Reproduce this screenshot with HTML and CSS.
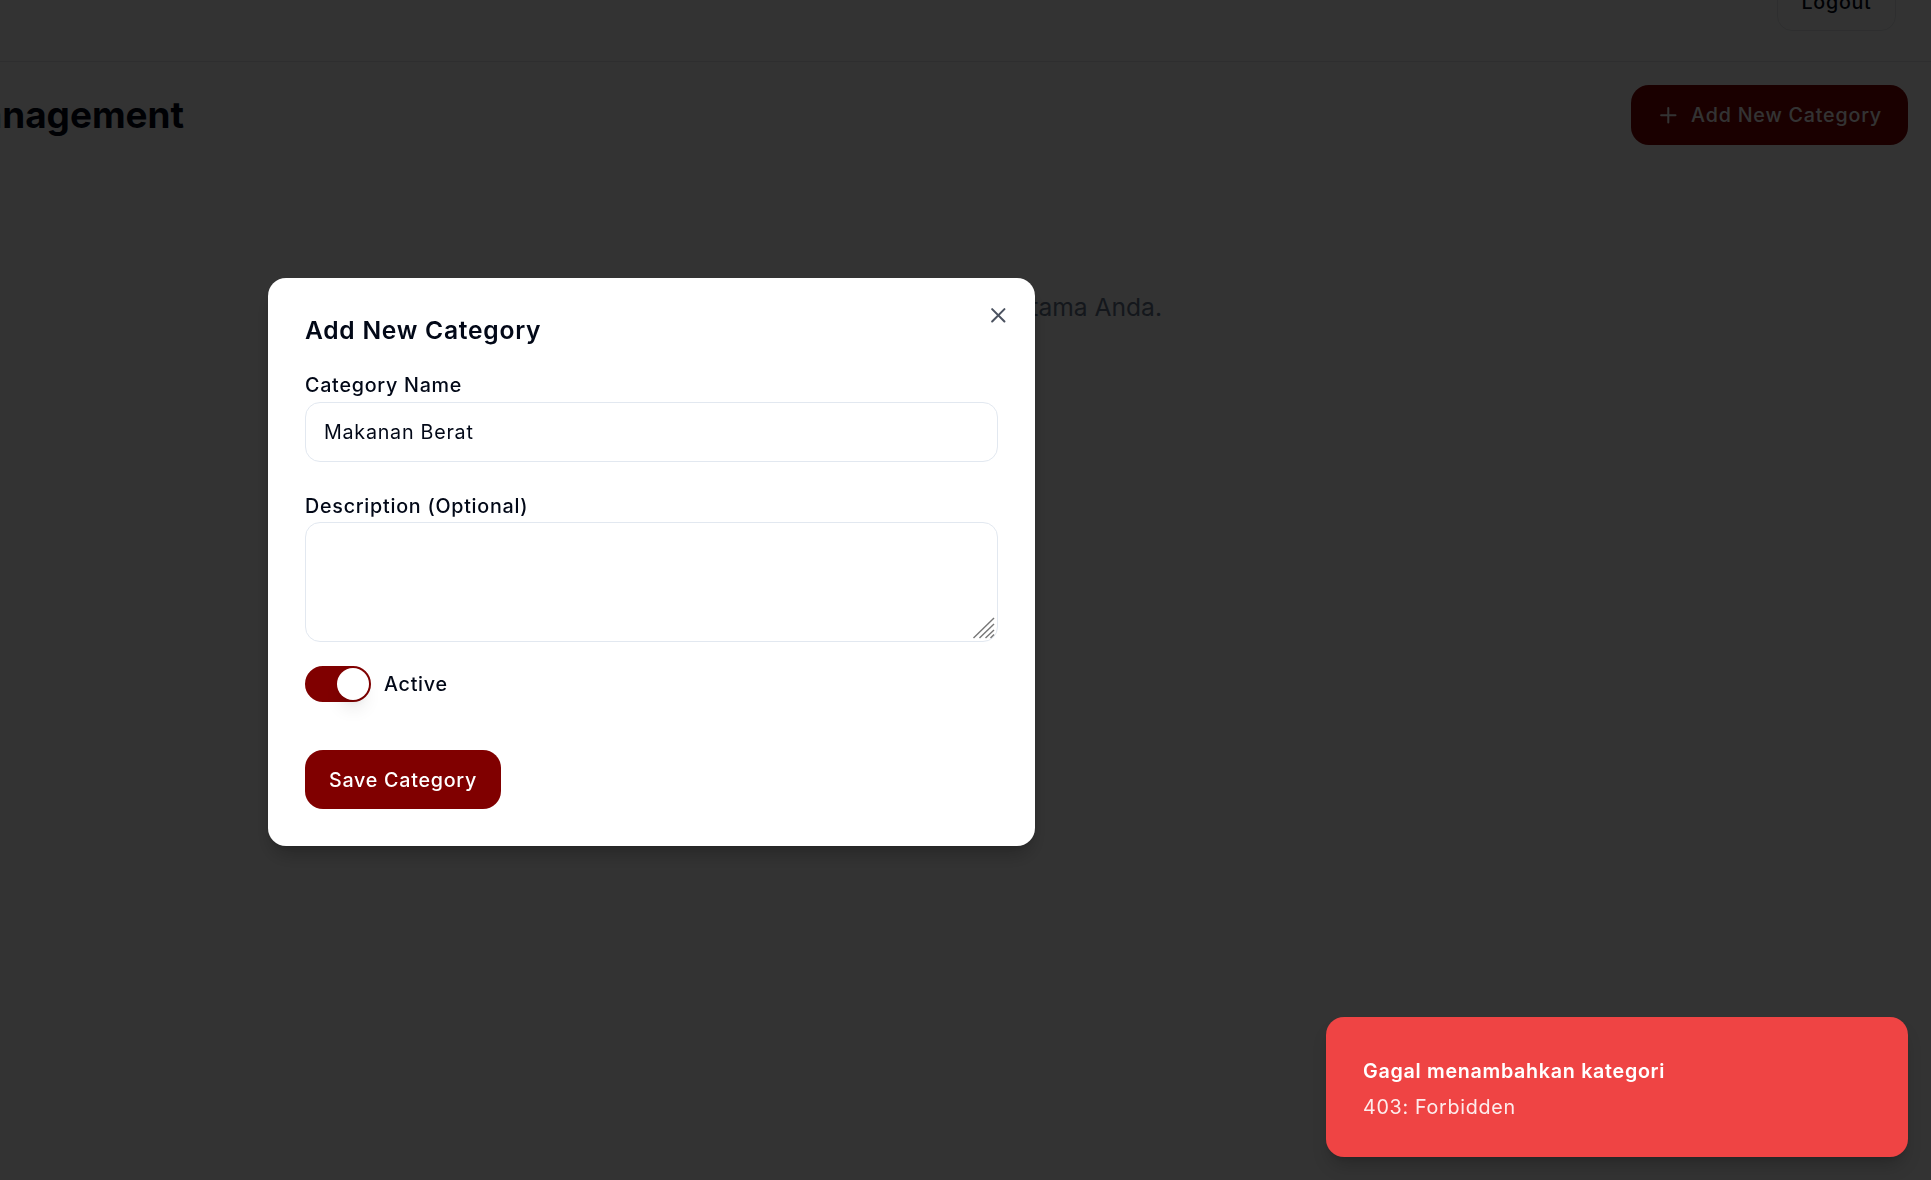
FILE: index.html
```html
<!DOCTYPE html>
<html lang="id">
<head>
<meta charset="utf-8">
<title>Category Management</title>
<link rel="stylesheet" href="styles.css">
</head>
<body>
<div class="page">
  <header class="topbar">
    <button class="logout-btn">Logout</button>
  </header>
  <main class="main">
    <div class="title-row">
      <div class="title-clip"><h1 class="page-title">Category Management</h1></div>
      <button class="add-btn">
        <svg class="plus-icon" viewBox="0 0 24 24" fill="none" stroke="currentColor" stroke-width="2" stroke-linecap="round" stroke-linejoin="round"><path d="M5 12h14"/><path d="M12 5v14"/></svg>
        <span>Add New Category</span>
      </button>
    </div>
    <p class="empty-text">Belum ada kategori. Tambahkan kategori untuk menu utama Anda.</p>
  </main>
</div>

<div class="overlay"></div>

<div class="modal" role="dialog">
  <h2 class="modal-title">Add New Category</h2>
  <button class="close-btn" aria-label="Close">
    <svg viewBox="0 0 24 24" fill="none" stroke="currentColor" stroke-width="2" stroke-linecap="round" stroke-linejoin="round"><path d="M18 6 6 18"/><path d="m6 6 12 12"/></svg>
  </button>
  <label class="field-label">Category Name</label>
  <input class="text-input" type="text" value="Makanan Berat">
  <label class="field-label second">Description (Optional)</label>
  <div class="area-wrap">
    <textarea class="text-area"></textarea>
    <svg class="grip" viewBox="0 0 22 22" fill="none" stroke="#767676" stroke-width="1.4" stroke-linecap="butt"><path d="M0.5 21 21 1"/><path d="M6.5 21 21 7"/><path d="M12.5 21 21 13"/><path d="M17.5 21 21 17.5"/></svg>
  </div>
  <div class="switch-row">
    <span class="switch"><span class="thumb"></span></span>
    <span class="switch-label">Active</span>
  </div>
  <button class="save-btn">Save Category</button>
</div>

<div class="toast">
  <div class="toast-title">Gagal menambahkan kategori</div>
  <div class="toast-desc">403: Forbidden</div>
</div>
</body>
</html>
```

FILE: styles.css
```css
* { box-sizing: border-box; }

html, body {
  margin: 0;
  padding: 0;
  width: 100%;
  height: 100%;
  overflow: hidden;
  background: #ffffff;
  font-family: "Inter", "Noto Sans", sans-serif;
  color: #020817;
}

button, input, textarea {
  font-family: inherit;
  letter-spacing: inherit;
}

.page {
  margin-top: -44px;
}

.topbar {
  height: 106px;
  padding: 16px 35px 0 0;
  display: flex;
  justify-content: flex-end;
  align-items: flex-start;
  border-bottom: 1px solid #e5e7eb;
}

.logout-btn {
  width: 119px;
  height: 59px;
  border: 1px solid #e5e7eb;
  border-radius: 15px;
  background: #ffffff;
  color: #020817;
  font-size: 19.7px;
  font-weight: 500;
  letter-spacing: 0.75px;
}

.main {
  padding: 23px 23px 0 0;
}

.title-row {
  display: flex;
  justify-content: space-between;
  align-items: center;
}

.title-clip {
  width: 184px;
  display: flex;
  justify-content: flex-end;
}

.page-title {
  margin: 0;
  white-space: nowrap;
  font-size: 36.9px;
  line-height: 44px;
  font-weight: 700;
  color: #020817;
}

.add-btn {
  display: flex;
  align-items: center;
  gap: 10px;
  height: 60px;
  padding: 0 26px 0 25px;
  border: none;
  border-radius: 18px;
  background: #800000;
  color: #ffffff;
  font-size: 19.7px;
  font-weight: 500;
  letter-spacing: 0.8px;
  white-space: nowrap;
}

.plus-icon {
  width: 24.6px;
  height: 24.6px;
  flex: none;
}

.empty-text {
  margin: 146px 0 0 0;
  padding-right: 746px;
  text-align: right;
  font-size: 24.6px;
  line-height: 32px;
  color: #64748b;
}

.overlay {
  position: fixed;
  inset: 0;
  background: rgba(0, 0, 0, 0.8);
}

.modal {
  position: fixed;
  left: 268px;
  top: 278px;
  width: 767px;
  padding: 37px;
  background: #ffffff;
  border-radius: 18px;
  letter-spacing: 0.75px;
  box-shadow: 0 12px 20px -4px rgba(0, 0, 0, 0.25), 0 4px 8px -4px rgba(0, 0, 0, 0.2);
  display: flex;
  flex-direction: column;
  align-items: flex-start;
}

.modal-title {
  margin: 0 0 28px 0;
  font-size: 24.6px;
  line-height: 30px;
  font-weight: 600;
  letter-spacing: 0.75px;
  color: #020817;
}

.close-btn {
  position: absolute;
  top: 25px;
  right: 24px;
  width: 24.6px;
  height: 24.6px;
  padding: 0;
  border: none;
  background: transparent;
  color: #4b5260;
  display: flex;
}

.close-btn svg {
  width: 24.6px;
  height: 24.6px;
}

.field-label {
  display: block;
  font-size: 19.7px;
  line-height: 24.6px;
  font-weight: 500;
  color: #020817;
  margin-bottom: 4.5px;
}

.field-label.second {
  margin-top: 32px;
  margin-bottom: 3.5px;
}

.text-input {
  width: 100%;
  height: 60px;
  border: 1px solid #e2e8f0;
  border-radius: 15px;
  padding: 0 18px;
  font-size: 19.7px;
  color: #020817;
  background: #ffffff;
  outline: none;
}

.area-wrap {
  position: relative;
  width: 100%;
}

.text-area {
  width: 100%;
  height: 120px;
  border: 1px solid #e2e8f0;
  border-radius: 15px;
  padding: 12px 18px;
  font-size: 19.7px;
  background: #ffffff;
  outline: none;
  display: block;
  resize: none;
}

.grip {
  position: absolute;
  right: 3px;
  bottom: 3px;
  width: 22px;
  height: 22px;
}

.switch-row {
  margin-top: 24px;
  display: flex;
  align-items: center;
  gap: 13px;
}

.switch {
  width: 66px;
  height: 36px;
  border: 2px solid #800000;
  border-radius: 18px;
  background: #800000;
  display: flex;
  justify-content: flex-end;
}

.thumb {
  width: 32px;
  height: 32px;
  border-radius: 50%;
  background: #ffffff;
  box-shadow: 0 12px 18px -4px rgba(0, 0, 0, 0.1), 0 5px 8px -5px rgba(0, 0, 0, 0.1);
}

.switch-label {
  font-size: 19.7px;
  line-height: 24.6px;
  font-weight: 500;
  color: #020817;
}

.save-btn {
  margin-top: 48px;
  height: 59px;
  padding: 0 24px;
  border: none;
  border-radius: 18px;
  background: #800000;
  color: #ffffff;
  font-size: 19.7px;
  font-weight: 500;
}

.toast {
  position: fixed;
  right: 23px;
  bottom: 23px;
  width: 582px;
  padding: 39px 37px 35px;
  border-radius: 18px;
  background: #ef4444;
  color: #ffffff;
  letter-spacing: 0.7px;
  box-shadow: 0 12px 18px -4px rgba(0, 0, 0, 0.2), 0 4px 7px -4px rgba(0, 0, 0, 0.2);
}

.toast-title {
  font-size: 19.7px;
  line-height: 30px;
  font-weight: 600;
}

.toast-desc {
  margin-top: 6px;
  font-size: 19.7px;
  line-height: 30px;
  opacity: 0.9;
}
```
